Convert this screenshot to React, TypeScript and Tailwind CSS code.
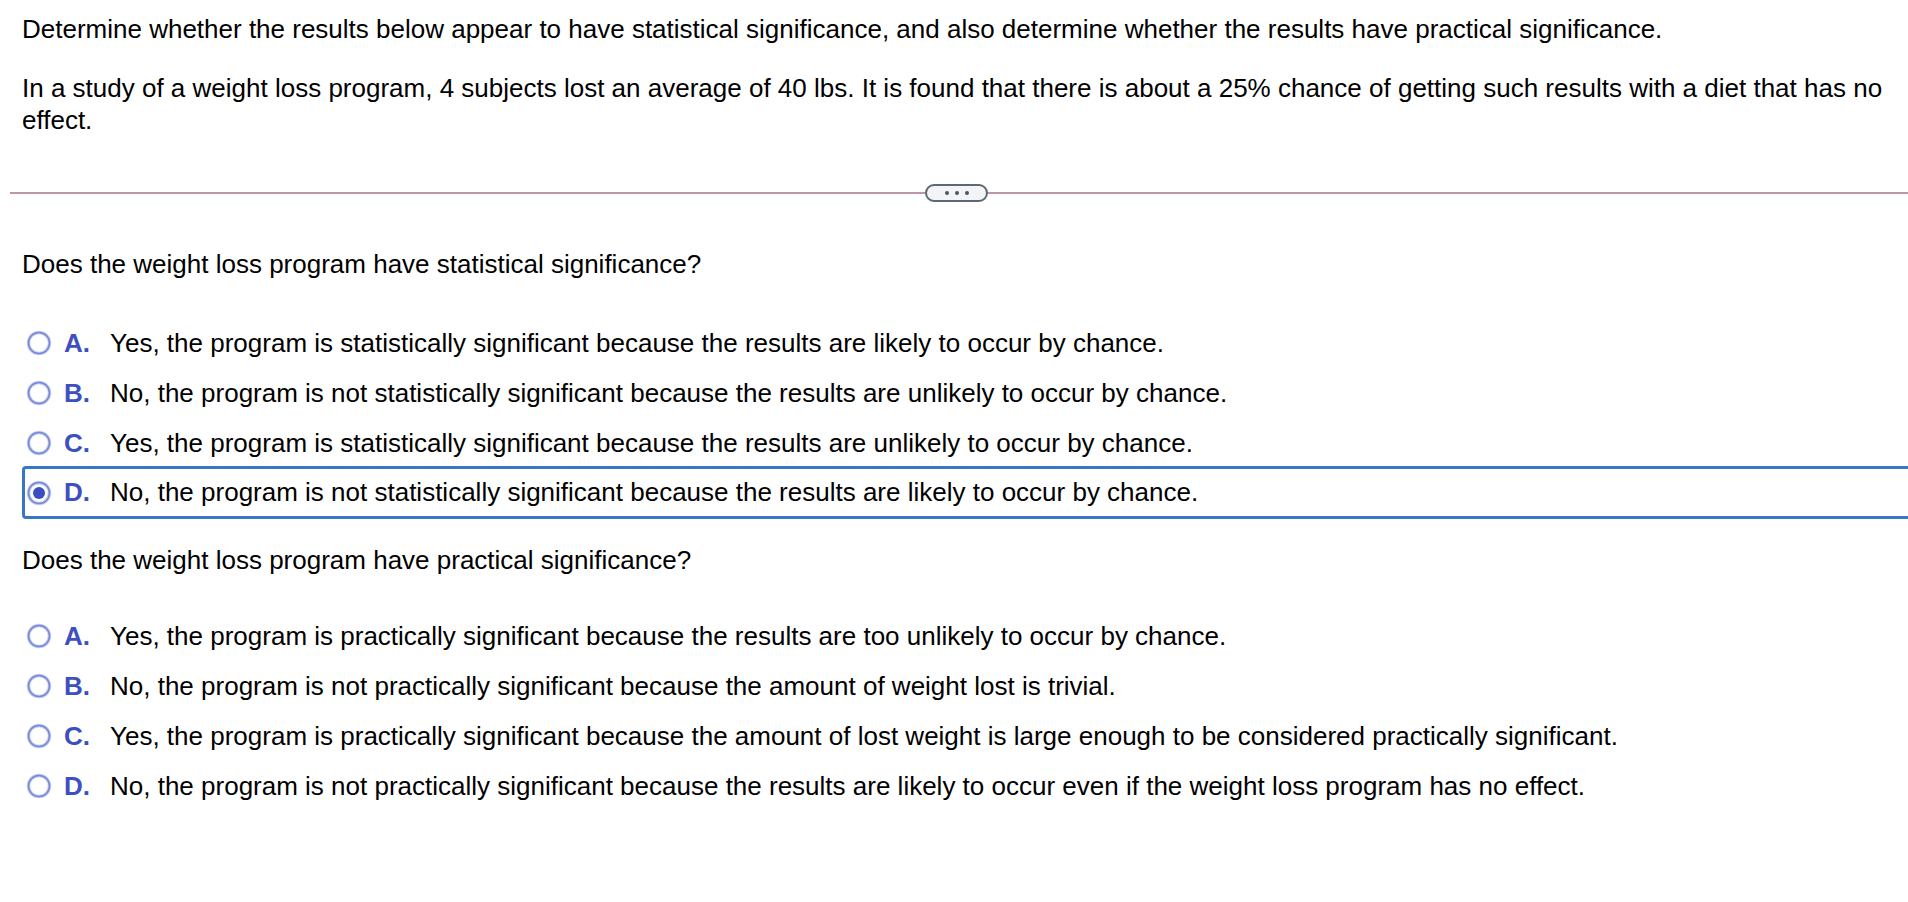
import React from "react";

type Choice = { letter: string; text: string };

const q1: Choice[] = [
  { letter: "A.", text: "Yes, the program is statistically significant because the results are likely to occur by chance." },
  { letter: "B.", text: "No, the program is not statistically significant because the results are unlikely to occur by chance." },
  { letter: "C.", text: "Yes, the program is statistically significant because the results are unlikely to occur by chance." },
  { letter: "D.", text: "No, the program is not statistically significant because the results are likely to occur by chance." },
];

const q2: Choice[] = [
  { letter: "A.", text: "Yes, the program is practically significant because the results are too unlikely to occur by chance." },
  { letter: "B.", text: "No, the program is not practically significant because the amount of weight lost is trivial." },
  { letter: "C.", text: "Yes, the program is practically significant because the amount of lost weight is large enough to be considered practically significant." },
  { letter: "D.", text: "No, the program is not practically significant because the results are likely to occur even if the weight loss program has no effect." },
];

function Radio({ checked }: { checked: boolean }) {
  return (
    <svg width="26" height="26" viewBox="0 0 26 26" aria-hidden className="shrink-0">
      <circle cx="13" cy="13" r="10.5" fill="white" stroke="#c3cbf0" strokeWidth="3.5" />
      <circle cx="13" cy="13" r="10.5" fill="none" stroke="#7689d8" strokeWidth="1.5" />
      {checked && <circle cx="13" cy="13" r="6" fill="#3b4fc2" />}
    </svg>
  );
}

function Row({ c, checked = false }: { c: Choice; checked?: boolean }) {
  return (
    <div className="flex h-[47px] items-center">
      <Radio checked={checked} />
      <span className="ml-[12px] w-[46px] shrink-0 font-bold text-[#3d50c1]">{c.letter}</span>
      <span className="whitespace-nowrap">{c.text}</span>
    </div>
  );
}

function Options({ items, selected }: { items: Choice[]; selected?: number }) {
  return (
    <div>
      {items.map((c, i) =>
        i === selected ? (
          <div
            key={c.letter}
            className="mt-[-2px] mr-[-40px] rounded-[4px] border-[3px] border-[#3777c4] pl-px"
          >
            <Row c={c} checked />
          </div>
        ) : (
          <div key={c.letter} className="flex h-[50px] items-center pl-[4px]">
            <Radio checked={false} />
            <span className="ml-[12px] w-[46px] shrink-0 font-bold text-[#3d50c1]">{c.letter}</span>
            <span className="whitespace-nowrap">{c.text}</span>
          </div>
        )
      )}
    </div>
  );
}

export default function App() {
  return (
    <div className="min-h-[902px] overflow-hidden bg-white pl-[22px] font-['Liberation_Sans',Arial,sans-serif] text-[26px] text-black">
      <p className="pt-[14px] leading-[30px]">
        Determine whether the results below appear to have statistical significance, and also determine whether the results have practical significance.
      </p>
      <p className="mt-[28px] pr-[10px] leading-[32px]">
        In a study of a weight loss program, 4 subjects lost an average of 40 lbs. It is found that there is about a 25% chance of getting such results with a diet that has no effect.
      </p>

      <div className="mt-[48px] ml-[-12px] flex h-[18px] items-center">
        <div className="h-[2px] w-[915px] bg-[#bc97a8]" />
        <div className="flex h-[18px] w-[63px] shrink-0 items-center justify-center gap-[6px] rounded-full border-2 border-[#5d6775] bg-[#f3f4f6]">
          <span className="h-[4px] w-[4px] rounded-full bg-[#4b5563]" />
          <span className="h-[4px] w-[4px] rounded-full bg-[#4b5563]" />
          <span className="h-[4px] w-[4px] rounded-full bg-[#4b5563]" />
        </div>
        <div className="h-[2px] flex-1 bg-[#bc97a8]" />
      </div>

      <p className="mt-[47px] leading-[30px]">Does the weight loss program have statistical significance?</p>
      <div className="mt-[39px]">
        <Options items={q1} selected={3} />
      </div>

      <p className="mt-[26px] leading-[30px]">Does the weight loss program have practical significance?</p>
      <div className="mt-[36px]">
        <Options items={q2} />
      </div>
    </div>
  );
}
